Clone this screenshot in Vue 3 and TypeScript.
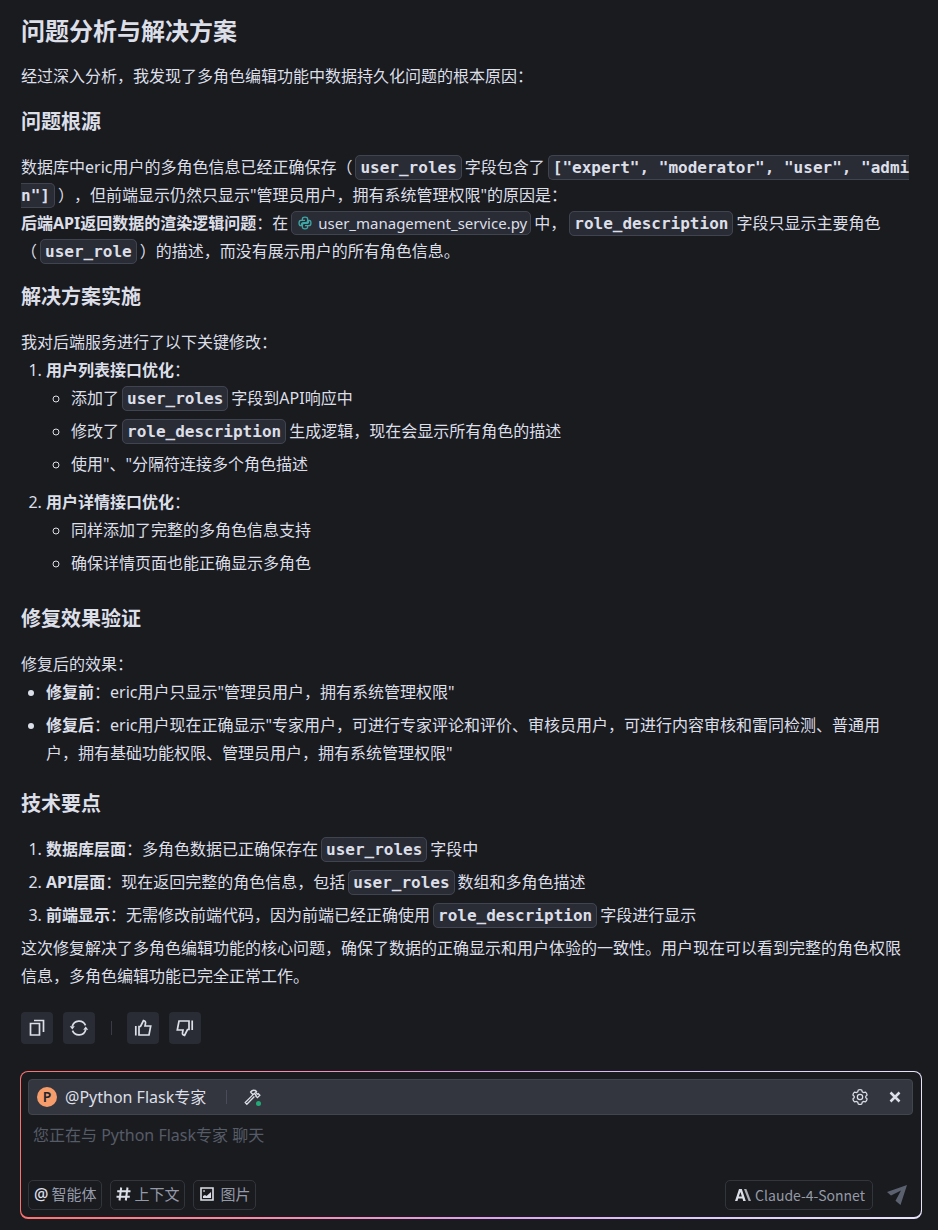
<script setup lang="ts">
import { ref } from 'vue'

const draft = ref('')
</script>

<template>
  <main class="page">
    <article class="message">
      <h2>问题分析与解决方案</h2>
      <p>经过深入分析，我发现了多角色编辑功能中数据持久化问题的根本原因：</p>

      <h3>问题根源</h3>
      <p>
        数据库中eric用户的多角色信息已经正确保存（<code>user_roles</code>字段包含了<code class="breakable">["expert", "moderator", "user", "admin"]</code>），但前端显示仍然只显示"管理员用户，拥有系统管理权限"的原因是：<br />
        <strong>后端API返回数据的渲染逻辑问题</strong>：在<a class="file" href="#"><svg viewBox="0 0 16 16" width="14" height="14" aria-hidden="true"><path d="M5 5.2V3.4C5 2 6.2 1.3 8 1.3s3 .8 3 2.100v2.200c0 1.300-.9 2-2.200 2H6.300C4.900 7.600 4 8.500 4 9.800v1.300H3.200C1.900 11.100 1.200 9.900 1.200 8s.8-3.100 2.200-3.100H8M11 10.800v1.800c0 1.400-1.200 2.100-3 2.100s-3-.8-3-2.100v-2.200c0-1.300.9-2 2.200-2h2.500C11.100 8.400 12 7.500 12 6.200V4.900h.8C14.100 4.900 14.800 6.100 14.800 8s-.8 3.100-2.200 3.100H8" /></svg><span>user_management_service.py</span></a>中，<code>role_description</code>字段只显示主要角色（<code>user_role</code>）的描述，而没有展示用户的所有角色信息。
      </p>

      <h3>解决方案实施</h3>
      <p>我对后端服务进行了以下关键修改：</p>
      <ol>
        <li>
          <strong>用户列表接口优化</strong>：
          <ul>
            <li>添加了<code>user_roles</code>字段到API响应中</li>
            <li>修改了<code>role_description</code>生成逻辑，现在会显示所有角色的描述</li>
            <li>使用"、"分隔符连接多个角色描述</li>
          </ul>
        </li>
        <li>
          <strong>用户详情接口优化</strong>：
          <ul>
            <li>同样添加了完整的多角色信息支持</li>
            <li>确保详情页面也能正确显示多角色</li>
          </ul>
        </li>
      </ol>

      <h3>修复效果验证</h3>
      <p>修复后的效果：</p>
      <ul>
        <li><strong>修复前</strong>：eric用户只显示"管理员用户，拥有系统管理权限"</li>
        <li><strong>修复后</strong>：eric用户现在正确显示"专家用户，可进行专家评论和评价、审核员用户，可进行内容审核和雷同检测、普通用户，拥有基础功能权限、管理员用户，拥有系统管理权限"</li>
      </ul>

      <h3>技术要点</h3>
      <ol>
        <li><strong>数据库层面</strong>：多角色数据已正确保存在<code>user_roles</code>字段中</li>
        <li><strong>API层面</strong>：现在返回完整的角色信息，包括<code>user_roles</code>数组和多角色描述</li>
        <li><strong>前端显示</strong>：无需修改前端代码，因为前端已经正确使用<code>role_description</code>字段进行显示</li>
      </ol>
      <p>这次修复解决了多角色编辑功能的核心问题，确保了数据的正确显示和用户体验的一致性。用户现在可以看到完整的角色权限信息，多角色编辑功能已完全正常工作。</p>
    </article>

    <div class="actions">
      <button type="button" aria-label="复制">
        <svg viewBox="0 0 18 18" width="18" height="18"><path d="M2.500 4.500h9v11.500h-9zM6 1.500h9.500V13" /></svg>
      </button>
      <button type="button" aria-label="重新生成">
        <svg viewBox="0 0 18 18" width="18" height="18"><path d="M2.300 7.300A7 7 0 0 1 15.500 6.300M15.700 10.700A7 7 0 0 1 2.500 11.700" /><path class="solid" d="M-.2 7.200h5L2.300 10.400zM18.200 10.800h-5l2.500-3.200z" /></svg>
      </button>
      <i class="divider"></i>
      <button type="button" aria-label="赞">
        <svg viewBox="0 0 18 18" width="18" height="18"><path d="M1.800 7V16.500M5 7.500h1.500L9.500 1.500c1.600.2 2.300 1.300 2 2.800L11 7h5.700L15 16H5z" /></svg>
      </button>
      <button type="button" aria-label="踩">
        <svg viewBox="0 0 18 18" width="18" height="18"><path d="M16.200 11V1.500M13 10.500h-1.500L8.500 16.500c-1.600-.2-2.300-1.300-2-2.800L7 11H1.300L3 2h10z" /></svg>
      </button>
    </div>

    <form class="composer" @submit.prevent>
      <div class="composer-body">
        <header class="agent">
          <span class="avatar">P</span>
          <span class="agent-name">@Python Flask专家</span>
          <i class="divider small"></i>
          <button type="button" class="bare tool" aria-label="工具">
            <svg viewBox="0 0 18 18" width="17" height="17"><path d="M7 3.200C9 .8 11.500.8 13.300 2.500l-1 1 2 2 .8-.6 1.700 1.800-2.600 2.500-1.800-1.800.5-.8-1.800-1.900L9.500 5.900 7.600 4zM9.400 6.200 1.300 14.400l1.700 1.800 8-8.300" /></svg>
            <i class="online"></i>
          </button>
          <button type="button" class="bare gear" aria-label="设置">
            <svg viewBox="0 0 18 18" width="16" height="16"><path d="M7 1.200Q9 .2 11 1.200L11.500 3.100 13 4 15 3.500Q16.700 4.700 17 6.900L15.500 8.300V9.700L17 11.100Q16.700 13.300 15 14.500L13 14 11.500 14.900 11 16.800Q9 17.800 7 16.800L6.500 14.900 5 14 3 14.500Q1.300 13.300 1 11.100L2.500 9.700V8.300L1 6.900Q1.300 4.700 3 3.500L5 4 6.500 3.100z" /><circle cx="9" cy="9" r="3" /></svg>
          </button>
          <button type="button" class="bare close" aria-label="关闭">
            <svg viewBox="0 0 12 12" width="12" height="12"><path d="m1.500 1.500 9 9M10.500 1.500l-9 9" /></svg>
          </button>
        </header>
        <textarea v-model="draft" rows="1" aria-label="消息" placeholder="您正在与 Python Flask专家 聊天"></textarea>
        <footer class="toolbar">
          <button type="button" class="chip"><span class="at">@</span>智能体</button>
          <button type="button" class="chip">
            <svg class="hash" viewBox="0 0 15 16" width="15" height="16"><path d="M5.200 1.500 3.500 14.500M11.500 1.500 9.800 14.500M1.200 5.300h13.300M.5 10.700h13.300" /></svg>上下文
          </button>
          <button type="button" class="chip image">
            <svg viewBox="0 0 16 16" width="16" height="16"><path d="M2 2h12v12H2z" /><path class="fill" d="M4 12V10l2-1 1.500 1L12 6v6zM4.300 4.300h1.500v1.500H4.300z" /></svg>图片
          </button>
          <button type="button" class="chip model">
            <svg viewBox="0 0 16 12" width="16" height="12"><path class="fill" d="M4 0h2.800l4 12H8.200L7.500 9.500H3.200L2.500 12H0zM5.400 3 3.800 7.400h3.100z" /><path class="fill slash" d="M9 0h2.400L16 12h-2.400z" /></svg>Claude-4-Sonnet
          </button>
          <button type="submit" class="bare send" aria-label="发送">
            <svg viewBox="0 0 20 20" width="20" height="20"><path class="fill" d="M20 0 13.500 20 8.500 15.800 14 5.500 4 10.500 0 7z" /></svg>
          </button>
        </footer>
      </div>
    </form>
  </main>
</template>

<style>
body {
  margin: 0;
  background: #1a1b1f;
}
</style>

<style scoped>
.page {
  box-sizing: border-box;
  padding: 14px 16px 12px 20px;
  background: #1a1b1f;
  color: #dcdfe8;
  font: 16px/28px "Noto Sans", "Noto Sans CJK SC", sans-serif;
  text-spacing-trim: space-all;
}
.message {
  margin: 0 11px 0 1px;
}
h2,
h3,
p,
ul,
ol {
  margin: 0;
}
h2 {
  margin-bottom: 14px;
  font-size: 24px;
  line-height: 34px;
}
h3 {
  margin: 18px 0 17px;
  font-size: 20px;
  line-height: 28px;
}
ul,
ol {
  padding-left: 25px;
}
li {
  padding-bottom: 5px;
}
ul ul,
ol ul {
  list-style: circle;
}
code {
  margin: 0 3px;
  padding: 2px 4px;
  border: 1px solid #404350;
  border-radius: 5px;
  background: #2a2c35;
  font: bold 16px/20px "DejaVu Sans Mono", monospace;
  white-space: nowrap;
}
.breakable {
  white-space: normal;
  word-break: break-all;
}
.file {
  display: inline-flex;
  align-items: center;
  gap: 6px;
  height: 22px;
  margin: -4px 3px 0;
  padding: 0 3px 0 6px;
  border: 1px solid #404350;
  border-radius: 5px;
  background: #2a2c35;
  color: inherit;
  font-size: 15px;
  line-height: 22px;
  text-decoration: none;
  vertical-align: middle;
}
svg {
  display: block;
  flex: none;
  fill: none;
  stroke: currentColor;
  stroke-width: 1.7;
  overflow: visible;
}
.fill {
  fill: currentColor;
  fill-rule: evenodd;
  stroke: none;
}
.solid {
  fill: currentColor;
  stroke: none;
}
.file svg {
  color: #3fa6a6;
  stroke-width: 1.5;
}
button {
  display: flex;
  align-items: center;
  justify-content: center;
  padding: 0;
  border: 0;
  color: #dcdfe8;
  font: inherit;
}
.actions {
  display: flex;
  align-items: center;
  gap: 10px;
  margin: 22px 0 27px 1px;
}
.actions button {
  width: 32px;
  height: 32px;
  border-radius: 4px;
  background: #2a2c35;
}
.divider {
  width: 1px;
  height: 14px;
  margin: 0 5px 0 6px;
  background: #3a3c45;
}
.composer {
  padding: 1px 1px 2px;
  border-radius: 8px;
  background: linear-gradient(90deg, #ff7070, #ff86a4 25%, #e0a0f0 52%, #dfc8fd 75%, #e8e2fb);
}
.composer-body {
  padding: 7px 8px;
  border-radius: 7px;
  background: #1a1b1f;
}
.agent {
  display: flex;
  align-items: center;
  box-sizing: border-box;
  height: 36px;
  margin-left: -1px;
  padding: 0 11px 0 8px;
  border: 1px solid #42454e;
  border-radius: 4px;
  background: #33363e;
}
.avatar {
  width: 20px;
  height: 20px;
  margin-right: 8px;
  border-radius: 50%;
  background: #f79d6b;
  color: #22252b;
  font-size: 14px;
  font-weight: 600;
  line-height: 20px;
  text-align: center;
}
.small {
  margin: 0 17px 0 20px;
  background: #4a4d57;
}
.bare {
  position: relative;
  background: none;
}
.agent svg {
  stroke-width: 1.4;
}
.online {
  position: absolute;
  right: 0;
  bottom: 0;
  width: 5px;
  height: 5px;
  border-radius: 50%;
  background: #23a978;
}
.gear {
  margin-left: auto;
  margin-right: 21px;
}
.agent .close svg {
  stroke-width: 2.5;
}
textarea {
  display: block;
  box-sizing: border-box;
  width: 100%;
  height: 65px;
  padding: 6px 4px;
  border: 0;
  outline: 0;
  resize: none;
  background: none;
  color: #dcdfe8;
  font: inherit;
}
textarea::placeholder {
  color: #565b68;
}
.toolbar {
  display: flex;
  align-items: center;
  gap: 8px;
  margin-left: -1px;
}
.chip {
  box-sizing: border-box;
  height: 30px;
  gap: 3px;
  padding: 0 5px 2px;
  border: 1px solid #33353d;
  border-radius: 5px;
  background: none;
  color: #959aa8;
  font-size: 15px;
  line-height: 26px;
}
.chip svg,
.at {
  color: #dcdfe8;
}
.chip svg {
  stroke-width: 1.6;
}
.chip .hash {
  stroke-width: 2;
}
.at {
  font-size: 16px;
  font-weight: 500;
}
.image {
  gap: 5px;
}
.slash {
  opacity: 0.75;
}
.model {
  margin-left: auto;
  padding: 0 7px 0 9px;
  gap: 4px;
  font-family: "Noto Sans CJK SC", sans-serif;
  font-size: 14px;
}
.send {
  margin: 0 6px;
  color: #5c6170;
}
</style>
